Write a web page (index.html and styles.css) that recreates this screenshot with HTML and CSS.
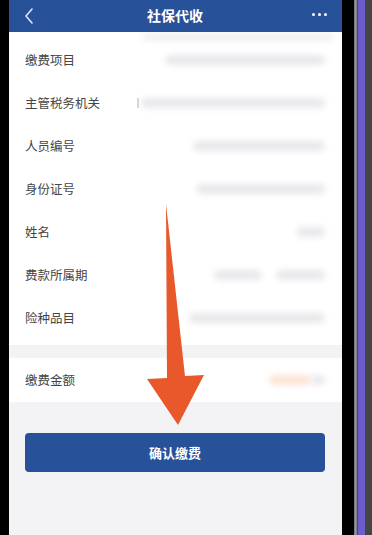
FILE: index.html
```html
<!DOCTYPE html>
<html lang="zh-CN">
<head>
  <meta charset="UTF-8">
  <title>社保代收</title>
  <link rel="stylesheet" href="styles.css">
</head>
<body>

<div class="device">
  <div class="edge-left"></div>

  <div class="screen">
    <div class="topbar">
      <svg class="back" width="12" height="16" viewBox="0 0 12 16">
        <path d="M9 1 L3 8 L9 15" fill="none" stroke="#dbe6f7" stroke-width="1.6" stroke-linecap="round" stroke-linejoin="round"/>
      </svg>
      <div class="title">社保代收</div>
      <div class="more"><span></span><span></span><span></span></div>
    </div>

    <div class="card details">
      <div class="peek"><div class="blur" style="width:190px"></div></div>

      <div class="row">
        <span class="label">缴费项目</span>
        <div class="value"><div class="blur" style="width:160px"></div></div>
      </div>
      <div class="row">
        <span class="label">主管税务机关</span>
        <div class="value"><div class="tick"></div><div class="blur" style="width:184px"></div></div>
      </div>
      <div class="row">
        <span class="label">人员编号</span>
        <div class="value"><div class="blur" style="width:132px"></div></div>
      </div>
      <div class="row">
        <span class="label">身份证号</span>
        <div class="value"><div class="blur" style="width:129px"></div></div>
      </div>
      <div class="row">
        <span class="label">姓名</span>
        <div class="value"><div class="blur" style="width:28px"></div></div>
      </div>
      <div class="row">
        <span class="label">费款所属期</span>
        <div class="value"><div class="blur" style="width:48px"></div><div class="blur" style="width:49px"></div></div>
      </div>
      <div class="row">
        <span class="label">险种品目</span>
        <div class="value"><div class="blur" style="width:136px"></div></div>
      </div>
    </div>

    <div class="gap"></div>

    <div class="card total">
      <div class="row">
        <span class="label">缴费金额</span>
        <div class="value amount"><div class="blur orange" style="width:42px"></div><div class="blur" style="width:14px"></div></div>
      </div>
    </div>

    <div class="actions">
      <button class="confirm">确认缴费</button>
    </div>
  </div>

  <div class="edge-right">
    <div class="bezel"></div>
    <div class="rim"></div>
    <div class="purple"></div>
    <div class="outside"></div>
  </div>

  <svg class="arrow" width="372" height="535" viewBox="0 0 372 535">
    <polygon points="166,204 185,376 204,375 178,425 147,379 167,378" fill="#e8582b"/>
  </svg>
</div>

</body>
</html>
```

FILE: styles.css
```css
* {
  box-sizing: border-box;
}

body {
  margin: 0;
  background-color: #000;
  font-family: "Noto Sans CJK SC", "Noto Sans", sans-serif;
}

.device {
  position: relative;
  display: flex;
  width: 372px;
  height: 535px;
  overflow: hidden;
}

.edge-left {
  width: 9px;
  background-color: #000;
}

.screen {
  width: 333px;
  display: flex;
  flex-direction: column;
  background-color: #f3f3f5;
}

.topbar {
  height: 32px;
  background-color: #27529a;
  display: flex;
  align-items: center;
  padding: 0 15px 0 14px;
  position: relative;
  z-index: 1;
}

.back {
  flex: none;
}

.title {
  flex: 1;
  text-align: center;
  color: #fff;
  font-size: 14px;
  font-weight: bold;
  margin-left: 3px;
  margin-top: -2px;
}

.more {
  display: flex;
  gap: 3px;
  margin-top: -4px;
}

.more span {
  width: 3px;
  height: 3px;
  border-radius: 50%;
  background-color: #fff;
}

.card {
  background-color: #fff;
}

.details {
  padding-bottom: 6px;
}

.peek {
  height: 6px;
  display: flex;
  justify-content: flex-end;
  padding: 2px 9px 0 0;
}

.row {
  height: 43px;
  display: flex;
  align-items: center;
  justify-content: space-between;
  padding: 0 17px 0 16px;
}

.total .row {
  height: 44px;
}

.label {
  font-size: 12.5px;
  color: #454545;
  margin-top: -1px;
}

.value {
  display: flex;
  align-items: center;
  gap: 14px;
}

.blur {
  height: 10px;
  background-color: #e8e8ec;
  border-radius: 5px;
  filter: blur(3px);
}

.peek .blur {
  height: 6px;
  background-color: #ececf0;
}

.tick {
  width: 2px;
  height: 10px;
  margin-right: -12px;
  background-color: #d4d4d8;
}

.amount {
  gap: 0;
}

.blur.orange {
  background-color: #fde3d4;
}

.gap {
  height: 13px;
}

.actions {
  padding: 31px 17px 0 16px;
}

.confirm {
  width: 100%;
  height: 39px;
  border: none;
  border-radius: 4px;
  background-color: #27529a;
  color: #fff;
  font-family: "Noto Sans CJK SC", "Noto Sans", sans-serif;
  font-size: 13px;
  font-weight: bold;
}

.edge-right {
  display: flex;
  width: 30px;
}

.bezel {
  width: 12px;
  background-color: #000;
}

.rim {
  width: 4px;
  background: linear-gradient(to right, #6f737a, #9aa0a8 50%, #2b2d33);
}

.purple {
  width: 7px;
  background-color: #6a5cc9;
}

.outside {
  width: 7px;
  background-color: #454545;
}

.arrow {
  position: absolute;
  left: 0;
  top: 0;
  pointer-events: none;
}
```
